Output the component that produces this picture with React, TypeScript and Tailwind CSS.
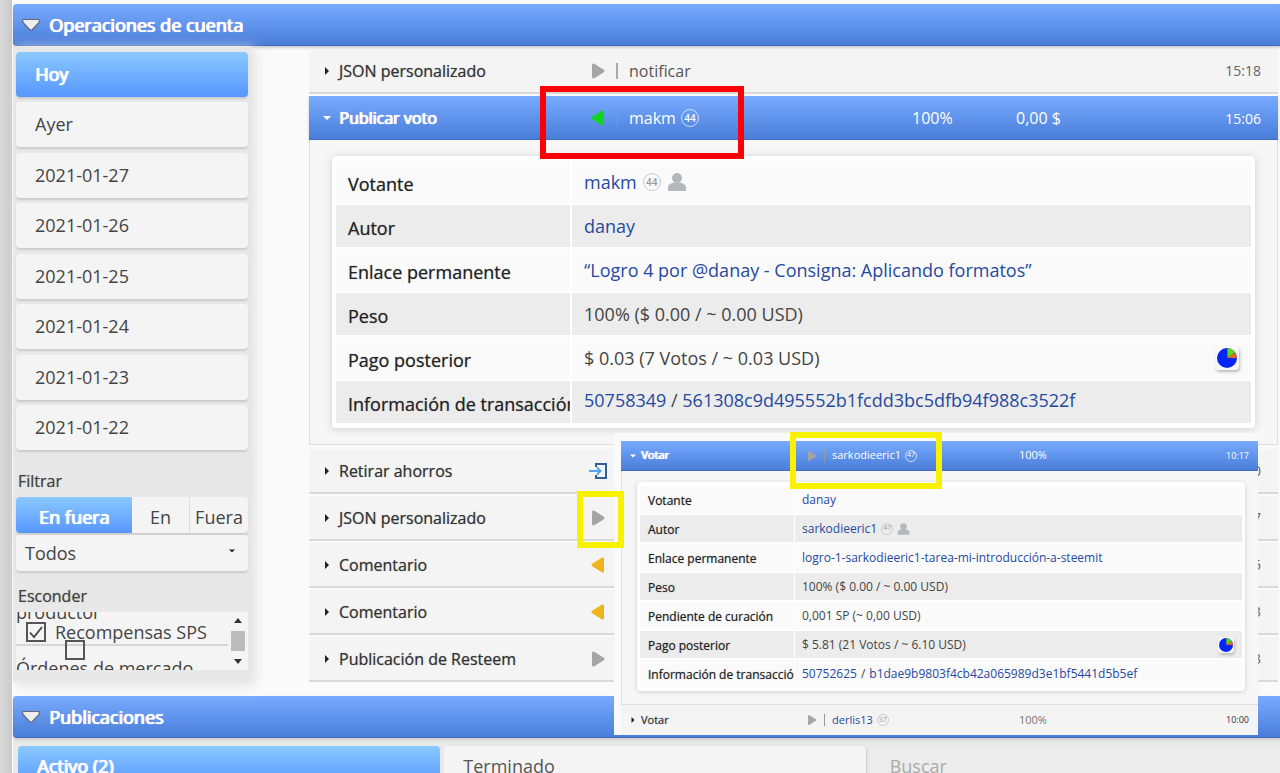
import { ReactNode } from "react";

const DAYS = ["Hoy", "Ayer", "2021-01-27", "2021-01-26", "2021-01-25", "2021-01-24", "2021-01-23", "2021-01-22"];

const OPERATIONS = [
  { label: "Retirar ahorros", icon: "enter", time: "14:40" },
  { label: "JSON personalizado", icon: "out", time: "14:37" },
  { label: "Comentario", icon: "in", time: "14:25" },
  { label: "Comentario", icon: "in", time: "14:03" },
  { label: "Publicación de Resteem", icon: "out", time: "13:53" },
];

const BAR = "bg-linear-to-b from-[#78abff] to-[#4a7dd8] border-b border-[#3f6cc0]";
const HEAVY = "[text-shadow:0_0_1px_currentColor,1px_0_0_currentColor]";
const SOFT = "[text-shadow:0_0_1px_#33333390]";
const ACTIVE = `bg-linear-to-b from-[#8bc8ff] to-[#5796ff] text-white ${HEAVY}`;
const LINK = "text-[#2649a0]";

function Arrow({ dir, color, small }: { dir: "left" | "right"; color: string; small?: boolean }) {
  return (
    <svg viewBox="0 0 14 18" className={small ? "w-[10px] h-[12px]" : "w-[14px] h-[18px]"} fill={color} stroke={color} strokeWidth="3" strokeLinejoin="round">
      {dir === "right" ? <path d="M2.500 3v12L12 9z" /> : <path d="M11.500 3v12L2 9z" />}
    </svg>
  );
}

function Caret({ open, color = "#222", small }: { open?: boolean; color?: string; small?: boolean }) {
  return (
    <svg viewBox="0 0 8 8" className={small ? "w-[6px] h-[6px]" : "w-2 h-2"} fill={color}>
      {open ? <path d="M0 2h8L4 6z" /> : <path d="M2 0v8l4-4z" />}
    </svg>
  );
}

function EnterIcon() {
  return (
    <svg viewBox="0 0 18 18" className="w-[18px] h-[18px]" fill="none" strokeWidth="2">
      <path d="M7 5V2h10v14H7v-3" stroke="#2f5f9e" />
      <path d="M0 9h11M8 5.500 11.500 9 8 12.500" stroke="#55a2ee" />
    </svg>
  );
}

function Person({ small }: { small?: boolean }) {
  return (
    <svg viewBox="0 0 20 18" className={small ? "w-[13px] h-[12px]" : "w-5 h-[18px]"} fill="#b3b8bd">
      <circle cx="10" cy="5" r="5" />
      <path d="M1 18v-3.500C1 11 5 10 7 9.500h6c2 .5 6 1.500 6 5V18z" />
    </svg>
  );
}

function Pie({ small }: { small?: boolean }) {
  return (
    <button
      aria-label="Ver votos"
      className={`rounded-sm bg-[#f8f8f8] shadow-[1px_2px_3px_#bbb] flex items-center justify-center shrink-0 ${small ? "size-4" : "size-6"}`}
    >
      <svg viewBox="0 0 20 20" className={small ? "size-[14px]" : "size-5"}>
        <circle cx="10" cy="10" r="10" fill="#0626f5" />
        <path d="M10.500 10V0A10 10 0 0 1 18 4.500z" fill="#5ddc1c" />
        <path d="M10.500 10 18 4.500A10 10 0 0 1 20 10z" fill="#e8661b" />
      </svg>
    </button>
  );
}

function Badge({ n, light, small }: { n: number; light?: boolean; small?: boolean }) {
  return (
    <span
      className={`inline-flex items-center justify-center rounded-full border shrink-0 ${small ? "size-3 text-[7px]" : "size-[18px] text-[10px] font-semibold"} ${light ? "border-white/70 text-white" : "border-[#ccc] text-[#999]"}`}
    >
      {n}
    </span>
  );
}

function SectionBar({ title }: { title: string }) {
  return (
    <h2 className={`h-[42px] flex items-center gap-2 pl-2 pt-px rounded-l-sm text-white text-[18px] shadow-[0_2px_3px_#ccc] ${HEAVY} ${BAR}`}>
      <svg viewBox="0 0 20 14" className="w-5 h-[14px]">
        <path d="M2 1.500h16L18.500 4 11 12H9L1.500 4z" fill="#eee" stroke="#667" strokeWidth="1.200" strokeLinejoin="round" />
      </svg>
      {title}
    </h2>
  );
}

function OperationRow({ label, icon, time, name }: { label: string; icon: string; time: string; name?: string }) {
  return (
    <div className="h-[45px] flex items-center pr-[17px] bg-[#f4f4f4] border-b-2 border-[#d9d9d9] text-[16px] text-[#333]">
      <button className={`w-[278px] flex items-center text-left ${SOFT}`}>
        <span className="w-[30px] pl-[14px]"><Caret /></span>
        {label}
      </button>
      <span className="w-[22px] flex justify-center">
        {icon === "enter" && <EnterIcon />}
        {icon === "out" && <Arrow dir="right" color="#a5a5a5" />}
        {icon === "in" && <Arrow dir="left" color="#eeb41c" />}
      </span>
      {name && <span className="ml-[7px] h-4 border-l-2 border-[#aaa] mr-[11px]" />}
      <span className="flex-1 text-[#555]">{name}</span>
      <span className="text-[14px] text-[#666]">{time}</span>
    </div>
  );
}

function DetailTable({ rows, small }: { rows: [string, ReactNode, boolean?][]; small?: boolean }) {
  return (
    <table
      className={`w-full table-fixed border-separate ${small ? "text-[12px] border-spacing-x-[1px] border-spacing-y-[2px]" : "text-[18px] border-spacing-[2px]"}`}
    >
      <tbody>
        {rows.map(([label, value, pie]) => (
          <tr key={label} className="odd:bg-[#fafafa] even:bg-[#ececec]">
            <th
              scope="row"
              className={`text-left font-normal text-[#222] whitespace-nowrap overflow-hidden ${SOFT} ${small ? "w-[154px] h-[27px] pl-2 pt-0.5" : "w-[234px] h-[42px] pl-3 pt-1"}`}
            >
              {label}
            </th>
            <td className={`text-[#444] ${small ? "pl-[7px] pr-2" : "px-3"}`}>
              <div className="flex items-center justify-between">
                <div className={`flex items-center ${small ? "gap-1" : "gap-1.5"}`}>{value}</div>
                {pie && <Pie small={small} />}
              </div>
            </td>
          </tr>
        ))}
      </tbody>
    </table>
  );
}

const VOTE_ROWS: [string, ReactNode, boolean?][] = [
  ["Votante", <><a href="#" className={LINK}>makm</a><Badge n={44} /><Person /></>],
  ["Autor", <a href="#" className={LINK}>danay</a>],
  ["Enlace permanente", <a href="#" className={LINK}>“Logro 4 por @danay - Consigna: Aplicando formatos”</a>],
  ["Peso", "100% ($ 0.00 / ~ 0.00 USD)"],
  ["Pago posterior", "$ 0.03 (7 Votos / ~ 0.03 USD)", true],
  [
    "Información de transacción",
    <span className="pb-1"><a href="#" className={LINK}>50758349</a> / <a href="#" className={LINK}>561308c9d495552b1fcdd3bc5dfb94f988c3522f</a></span>,
  ],
];

const INSET_ROWS: [string, ReactNode, boolean?][] = [
  ["Votante", <a href="#" className={LINK}>danay</a>],
  ["Autor", <><a href="#" className={LINK}>sarkodieeric1</a><Badge n={47} small /><Person small /></>],
  ["Enlace permanente", <a href="#" className={LINK}>logro-1-sarkodieeric1-tarea-mi-introducción-a-steemit</a>],
  ["Peso", "100% ($ 0.00 / ~ 0.00 USD)"],
  ["Pendiente de curación", "0,001 SP (~ 0,00 USD)"],
  ["Pago posterior", "$ 5.81 (21 Votos / ~ 6.10 USD)", true],
  [
    "Información de transacción",
    <><a href="#" className={LINK}>50752625</a>/<a href="#" className={LINK}>b1dae9b9803f4cb42a065989d3e1bf5441d5b5ef</a></>,
  ],
];

function InsetRow({ open, name, level, time }: { open?: boolean; name: string; level: number; time: string }) {
  return (
    <div className={`h-[30px] flex items-center pr-[9px] text-[11px] ${open ? `text-white ${BAR}` : "bg-[#f4f4f4] text-[#333]"}`}>
      <button className={`w-[186px] flex items-center text-left ${open ? HEAVY : SOFT}`}>
        <span className="w-5 pl-[9px]"><Caret open={open} color={open ? "#fff" : "#222"} small /></span>
        Votar
      </button>
      <Arrow dir="right" color="#a5a5a5" small />
      <span className="mx-[7px] h-3 border-l border-[#999]" />
      <span className="w-[187px] flex items-center gap-1">
        <a href="#" className={open ? "text-white" : LINK}>{name}</a>
        <Badge n={level} light={open} small />
      </span>
      <span className={open ? "flex-1" : "flex-1 text-[#777]"}>100%</span>
      <span className="text-[9px]">{time}</span>
    </div>
  );
}

function Sidebar() {
  return (
    <aside className="w-[238px] shrink-0 bg-[#e8e8e8] px-[3px] pt-1.5 pb-3 shadow-[3px_2px_12px_#ddd] text-[#444]">
      <ul className="flex flex-col justify-between min-h-[398px]">
        {DAYS.map((day, i) => (
          <li key={day}>
            <button
              className={`w-full h-[45px] pl-[19px] text-left text-[18px] rounded-sm shadow-[0_2px_2px_#ccc] ${i === 0 ? ACTIVE : "bg-[#f4f4f4]"}`}
            >
              {day}
            </button>
          </li>
        ))}
      </ul>

      <h3 className={`mt-5 ml-[2px] text-[16px] leading-[22px] ${SOFT}`}>Filtrar</h3>
      <div className="mt-[5px] h-9 flex text-[18px] rounded-sm shadow-[0_2px_2px_#ccc] bg-[#f4f4f4]">
        <button className={`w-[116px] pt-1 rounded-l-sm ${ACTIVE}`}>En fuera</button>
        <button className="flex-1 pt-1">En</button>
        <button className="w-[59px] pt-1 border-l border-[#ddd]">Fuera</button>
      </div>
      <div className="mt-[2px] relative">
        <select aria-label="Filtrar" className="appearance-none block w-full h-9 px-[9px] text-[18px] rounded-sm bg-[#f4f4f4] shadow-[0_2px_2px_#ccc]">
          <option>Todos</option>
        </select>
        <span className="absolute right-[13px] top-[13px] pointer-events-none"><Caret open small /></span>
      </div>

      <h3 className={`mt-[14px] ml-[2px] text-[16px] leading-[22px] ${SOFT}`}>Esconder</h3>
      <div className="mt-[5px] h-[58px] flex bg-[#f4f4f4] overflow-hidden text-[18px] leading-6">
        <div className="flex-1 relative whitespace-nowrap">
          <div className="-mt-3 h-[22px]">productor</div>
          <label className="h-6 flex items-start border-b-2 border-[#d5d5d5] gap-[9px] pl-[10px] leading-[20px]">
            <span className="relative size-5">
              <input type="checkbox" defaultChecked className="appearance-none block size-5 border-2 border-[#555] bg-[#f4f4f4]" />
              <svg viewBox="0 0 20 20" className="absolute inset-0 size-5 pointer-events-none" fill="none" stroke="#444" strokeWidth="1.800">
                <path d="M4 10.500 8 15l8-10" />
              </svg>
            </span>
            Recompensas SPS
          </label>
          <label className="block pt-2.5">
            <input type="checkbox" className="appearance-none absolute left-[49px] top-7 size-5 border-2 border-[#555]" />
            Órdenes de mercado
          </label>
        </div>
        <div className="w-5 flex flex-col items-center justify-between py-1.5 bg-[#f4f4f4]">
          <svg viewBox="0 0 8 5" className="w-2 h-[5px]" fill="#333"><path d="M0 5h8L4 0z" /></svg>
          <span className="w-[14px] h-5 bg-[#bcbcbc]" />
          <svg viewBox="0 0 8 5" className="w-2 h-[5px]" fill="#333"><path d="M0 0h8L4 5z" /></svg>
        </div>
      </div>
    </aside>
  );
}

function VoteInset() {
  return (
    <div className="absolute left-[614px] right-[22px] top-[433px] pl-[7px] pt-2 bg-[#fafafa]">
      <InsetRow open name="sarkodieeric1" level={47} time="10:17" />
      <div className="border-l border-b border-[#ddd] bg-[#f7f7f7] pl-[15px] pr-[13px] pt-[11px] pb-[13px]">
        <div className="bg-white rounded-sm px-[2px] py-[2px] shadow-[0_1px_5px_#ccc]">
          <DetailTable rows={INSET_ROWS} small />
        </div>
      </div>
      <InsetRow name="derlis13" level={37} time="10:00" />
    </div>
  );
}

export default function App() {
  return (
    <div className="relative flex min-h-screen overflow-hidden bg-[#fafafa] font-['Open_Sans','Noto_Sans',sans-serif]">
      <div className="w-[13px] shrink-0 bg-linear-to-r from-[#dadada] to-[#c9c9c9] border-r border-white" />
      <main className="flex-1 min-w-0 pt-1">
        <SectionBar title="Operaciones de cuenta" />
        <div className="flex items-start">
          <Sidebar />
          <section className="flex-1 min-w-0 ml-[58px] mr-[2px] pt-[3px] flex flex-col">
            <OperationRow label="JSON personalizado" icon="out" name="notificar" time="15:18" />
            <div className={`mt-[2px] h-11 flex items-center pr-[17px] pt-px text-white text-[16px] shadow-[0_2px_3px_#ccc] ${BAR}`}>
              <button className={`w-[278px] flex items-center text-left ${HEAVY}`}>
                <span className="w-[30px] pl-[14px]"><Caret open color="#fff" /></span>
                Publicar voto
              </button>
              <span className="w-[22px] flex justify-center"><Arrow dir="left" color="#12d321" /></span>
              <span className="ml-2 mr-[11px] h-4 border-l border-[#999]" />
              <span className="w-[283px] flex items-center gap-[5px]">
                <a href="#">makm</a>
                <Badge n={44} light />
              </span>
              <span className="w-[104px]">100%</span>
              <span className="flex-1">0,00 $</span>
              <span className="text-[14px]">15:06</span>
            </div>
            <div className="border border-t-0 border-[#ddd] bg-[#f7f7f7] px-[22px] py-4 mb-1">
              <div className="bg-white rounded-sm px-[2px] pt-[3px] pb-[3px] shadow-[0_1px_8px_#ccc]">
                <DetailTable rows={VOTE_ROWS} />
              </div>
            </div>
            <div className="flex flex-col gap-[2px]">
              {OPERATIONS.map((op, i) => (
                <OperationRow key={i} {...op} />
              ))}
            </div>
          </section>
        </div>

        <div className="mt-[14px] bg-[#e9e9e9]">
          <SectionBar title="Publicaciones" />
          <div className="grid grid-cols-[422fr_421fr_410fr] gap-1 pl-[5px] pt-2 text-[18px] text-[#555]">
            <button className={`h-10 pl-[19px] text-left rounded-t-sm ${ACTIVE}`}>Activo (2)</button>
            <button className="h-10 pl-[19px] text-left rounded-t-sm bg-[#f4f4f4] shadow-[1px_1px_2px_#ccc]">Terminado</button>
            <input aria-label="Buscar" placeholder="Buscar" className="h-10 min-w-0 pl-5 bg-[#ececec] placeholder:text-[#aaa]" />
          </div>
        </div>
      </main>

      <VoteInset />

      <div className="absolute left-[540px] top-[86px] w-[204px] h-[73px] border-[6px] border-[#fb0007] pointer-events-none" />
      <div className="absolute left-[577px] top-[491px] w-[47px] h-[57px] border-[6px] border-[#f8f200] pointer-events-none" />
      <div className="absolute left-[790px] top-[432px] w-[152px] h-[57px] border-[6px] border-[#f8f200] pointer-events-none" />
    </div>
  );
}
